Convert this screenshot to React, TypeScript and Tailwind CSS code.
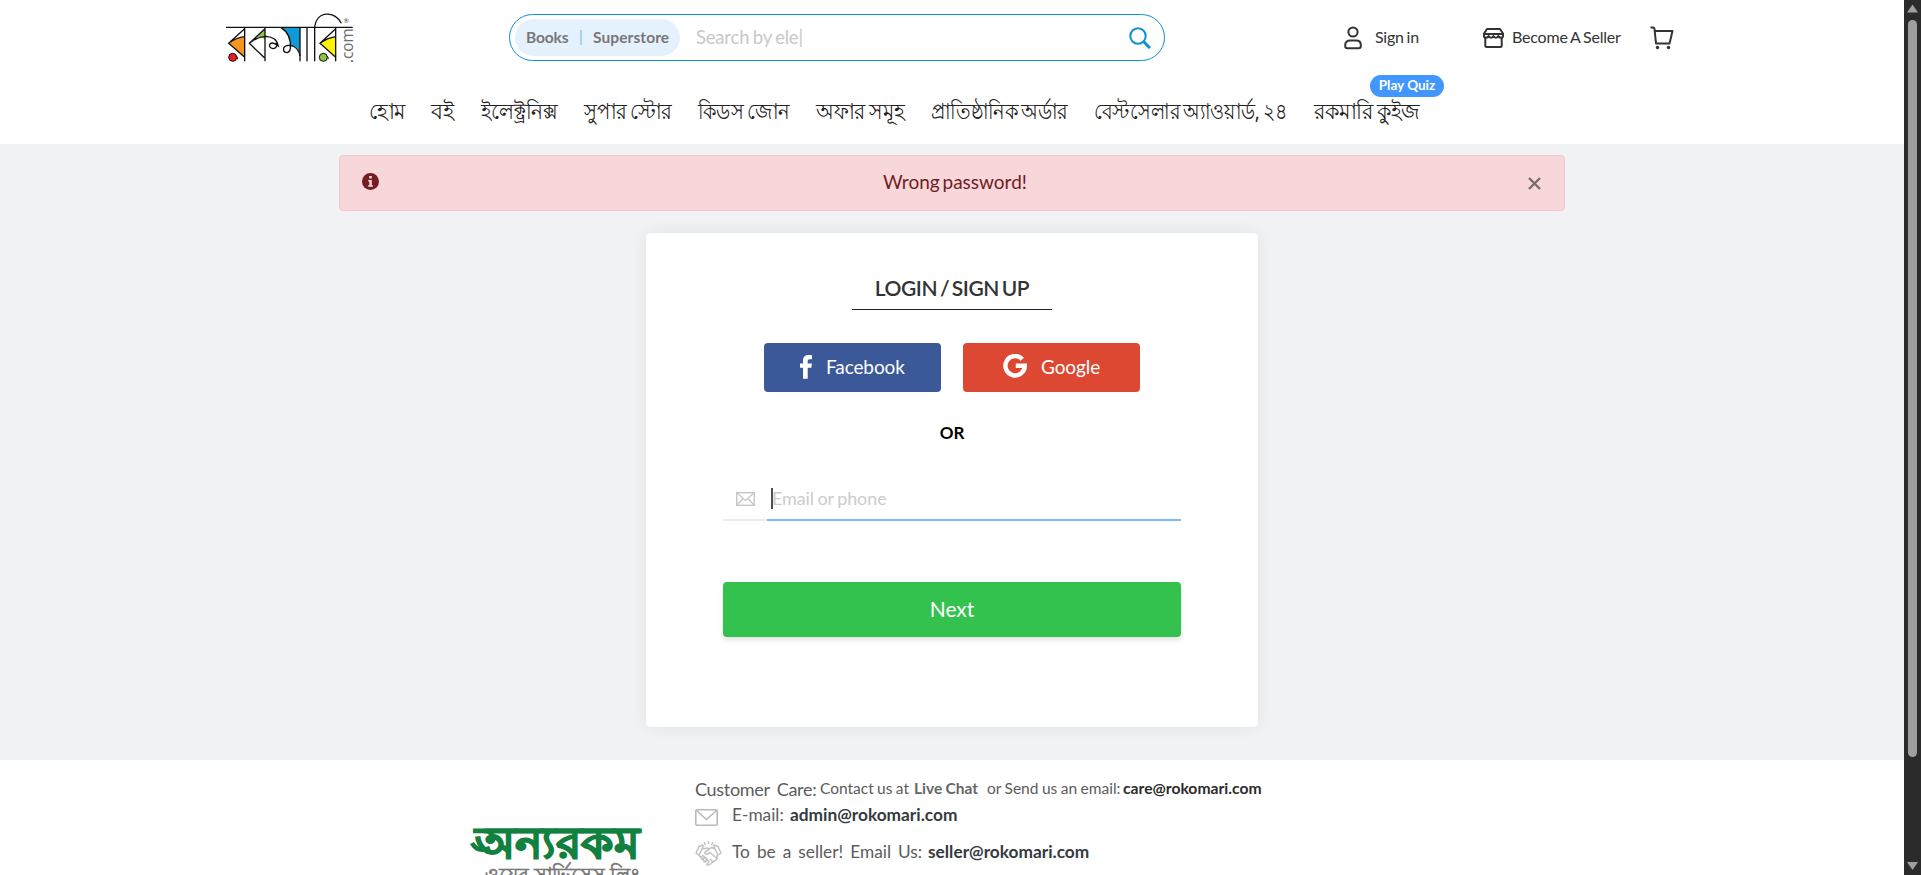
import type { ReactNode } from "react";

function RokomariLogo() {
  return (
    <svg className="h-[72px] w-[130px] shrink-0 overflow-visible" viewBox="45 0 390 216" fill="none" stroke="#111" strokeWidth="4">
      <path d="M56 130Q78 113 104 110V172Z" fill="#f7941d" stroke="none" />
      <path d="M104 86L56 130L104 172M56 130Q78 113 104 110M104 82V184" />
      <circle cx="68" cy="172" r="12" fill="#ed1c24" strokeWidth="3" />
      <path d="M79 168Q85 173 82 178" strokeWidth="3" />
      <path d="M165 88L142 112Q153 106 165 120Z" fill="#8dc63f" stroke="none" />
      <path d="M165 86L118 130L165 175M165 82V184M118 130Q140 110 168 109Q200 111 205 138Q188 124 180 132Q175 143 189 146Q203 144 199 128" />
      <path d="M213 83H270V158Q262 140 243 136Q244 101 213 83Z" fill="#0f9bd8" stroke="none" />
      <path d="M213 83Q245 103 241 145Q239 158 229 158Q219 156 221 144Q227 132 249 138Q268 148 270 168" />
      <path d="M270 82V184M291 82V184M314 184V82C320 28 378 34 394 70" />
      <path d="M377 110Q352 114 330 130L377 172Z" fill="#fff200" stroke="none" />
      <path d="M377 86L330 130L377 172M330 130Q352 114 377 110M377 82V184M48 82H428" />
      <circle cx="340" cy="172" r="12" fill="#8dc63f" strokeWidth="3" />
      <path d="M351 168Q357 173 354 178" strokeWidth="3" />
      <text x="0" y="0" transform="translate(428 189) rotate(-90)" fontSize="48" textLength="104" lengthAdjust="spacingAndGlyphs" className="font-['Open_Sans']" fill="#6d6e71" stroke="none">.com</text>
      <text x="401" y="70" fontSize="19" className="font-[Lato]" fill="#444" stroke="none">®</text>
    </svg>
  );
}

function SearchBar() {
  return (
    <div className="ml-[154px] flex h-[47px] w-[656px] shrink-0 items-center rounded-full border border-[#0e90cf] pl-[5px] pr-[13px]">
      <div className="flex h-[37px] w-[165px] items-center rounded-full bg-[#e6f1fe] pl-[11px] text-[15.5px] font-bold text-[#777]">
        <span className="w-[54px] tracking-[-0.1px]">Books</span>
        <span className="mr-[11px] h-[15px] w-[2px] bg-[#a9cffb]" />
        <span className="tracking-[0.1px]">Superstore</span>
      </div>
      <span className="ml-[16px] flex-1 text-[18.5px] tracking-[-0.2px] text-[#c8c8c8] [word-spacing:-1px]">Search by ele|</span>
      <svg className="h-[22px] w-[22px]" viewBox="0 0 22 22" fill="none" stroke="#0e90cf">
        <circle cx="9" cy="9" r="7.7" strokeWidth="2" />
        <path d="M14.5 14.5L21 21" strokeWidth="3" />
      </svg>
    </div>
  );
}

function HeaderLinks() {
  return (
    <div className="ml-[179px] flex items-center text-[16px] text-[#333] [word-spacing:-1px]">
      <svg className="h-[24px] w-[18px]" viewBox="0 0 18 24" fill="none" stroke="#333" strokeWidth="2">
        <circle cx="9" cy="6" r="4.6" />
        <path d="M1.2 19C1.2 15.8 3.6 14.6 6 14.6H12C14.4 14.6 16.8 15.8 16.8 19V20C16.8 21.600 16 22.200 14.600 22.200H3.400C2 22.200 1.200 21.600 1.200 20Z" />
      </svg>
      <span className="mb-[2px] ml-[13px] w-[108px] tracking-[-0.25px]">Sign in</span>
      <svg className="h-[20px] w-[21px]" viewBox="0 0 21 20" fill="none" stroke="#333" strokeWidth="2" strokeLinejoin="round">
        <path d="M4 1H17L20 5.500V8C20 10.300 16.300 10.300 15.300 8C14.500 10.300 11.300 10.300 10.500 8C9.700 10.300 6.500 10.300 5.700 8C4.700 10.300 1 10.300 1 8V5.500Z" />
        <path d="M1.500 6H19.500M2.300 9.500V17.500Q2.300 19 3.800 19H17.200Q18.700 19 18.700 17.500V9.500" />
      </svg>
      <span className="mb-[2px] ml-[8px] w-[138px] tracking-[-0.2px]">Become A Seller</span>
      <svg className="h-[24px] w-[24px]" viewBox="0 0 24 24" fill="none" stroke="#333" strokeWidth="2" strokeLinejoin="round">
        <path d="M0.500 1.500H3Q4.300 1.500 4.500 3L6 17.500H19.500L22.500 5H5" />
        <circle cx="7.500" cy="21.500" r="1.700" fill="#333" stroke="none" />
        <circle cx="18.500" cy="21.500" r="1.700" fill="#333" stroke="none" />
      </svg>
    </div>
  );
}

function NavItem({ className, children }: { className: string; children: ReactNode }) {
  return (
    <li className={className}>
      <a className="whitespace-nowrap">{children}</a>
    </li>
  );
}

function Nav() {
  return (
    <nav className="flex h-[72px] items-center pl-[369px] pt-[4px]">
      <ul className="flex font-['Noto_Sans',sans-serif] text-[22px] leading-[30px] text-[#222] [word-spacing:-2px]">
        <NavItem className="w-[62px] origin-left scale-x-[0.93]">হোম</NavItem>
        <NavItem className="w-[50px] origin-left scale-x-[0.98]">বই</NavItem>
        <NavItem className="w-[103px] origin-left scale-x-[0.91]">ইলেক্ট্রনিক্স</NavItem>
        <NavItem className="w-[114px] origin-left scale-x-[0.89]">সুপার স্টোর</NavItem>
        <NavItem className="w-[118px] origin-left scale-x-[0.88]">কিডস জোন</NavItem>
        <NavItem className="w-[115px] origin-left scale-x-[0.93]">অফার সমূহ</NavItem>
        <NavItem className="w-[163px] origin-left scale-x-[0.88]">প্রাতিষ্ঠানিক অর্ডার</NavItem>
        <NavItem className="w-[220px] origin-left scale-x-[0.87]">বেস্টসেলার অ্যাওয়ার্ড, ২৪</NavItem>
        <li className="relative w-[106px]">
          <a className="inline-block origin-left scale-x-[0.94] whitespace-nowrap">রকমারি কুইজ</a>
          <span className="absolute left-[56px] top-[-20px] flex h-[22px] w-[74px] items-center justify-center rounded-full bg-[#4197ff] font-[Lato] text-[13.5px] font-bold leading-none text-white [word-spacing:0px]">
            Play Quiz
          </span>
        </li>
      </ul>
    </nav>
  );
}

function Alert() {
  return (
    <div className="mx-auto flex h-[56px] w-[1226px] items-center rounded-[4px] border border-[#f5c6cb] bg-[#f8d7da] pl-[22px] pr-[23px] text-[#721c24]">
      <svg className="mb-[3px] h-[17px] w-[17px]" viewBox="0 0 17 17">
        <circle cx="8.500" cy="8.500" r="8.500" fill="#721c24" />
        <path d="M7.200 3H9.800V5.400H7.200ZM6.200 7H9.800V12.200H10.900V13.800H6.200V12.200H7.300V8.600H6.200Z" fill="#f8d7da" />
      </svg>
      <span className="mb-px ml-[504px] flex-1 text-[19px] [word-spacing:-2px]">Wrong password!</span>
      <svg className="mt-px h-[13px] w-[13px]" viewBox="0 0 13 13" stroke="#7c6b6d" strokeWidth="2.400">
        <path d="M1 1L12 12M12 1L1 12" />
      </svg>
    </div>
  );
}

function LoginCard() {
  return (
    <section className="mx-auto mt-[22px] flex h-[494px] w-[612px] flex-col items-center rounded-[4px] bg-white shadow-[0_0_16px_rgba(0,0,0,0.07)]">
      <h1 className="mt-[37px] flex h-[40px] w-[200px] items-center justify-center whitespace-nowrap border-b border-[#222] pb-[4px] text-[21px] font-semibold tracking-[-0.45px] text-[#333] [word-spacing:-2px]">
        LOGIN / SIGN UP
      </h1>
      <div className="mt-[33px] flex gap-[22px] text-[19px] tracking-[-0.1px] text-white">
        <button className="flex h-[49px] w-[177px] items-center rounded-[4px] bg-[#3b5998] pl-[36px]">
          <svg className="mb-[2px] h-[24px] w-[12px]" viewBox="0 0 12 24" fill="#fff">
            <path d="M12 .2V4.200H9.700C8 4.200 7.700 5 7.700 6.200V8.600H11.900L11.400 12.800H7.700V23.800H3V12.800H0V8.600H3V5.600C3 2 5.200 0 8.500 0C10 0 11.400.1 12 .2Z" />
          </svg>
          <span className="ml-[14px]">Facebook</span>
        </button>
        <button className="flex h-[49px] w-[177px] items-center rounded-[4px] bg-[#dd4832] pl-[40px]">
          <svg className="mb-[3px] h-[24px] w-[24px]" viewBox="0 0 24 24" fill="none" stroke="#fff" strokeWidth="4.400">
            <path d="M19.300 5.200A9.700 9.700 0 1 0 21.800 11.700H12.800" />
          </svg>
          <span className="ml-[14px]">Google</span>
        </button>
      </div>
      <div className="mt-[29px] text-[17px] font-bold leading-[24px] text-black">OR</div>
      <div className="mt-[33px] flex h-[43px] w-[458px]">
        <span className="flex w-[44px] items-center border-b-2 border-[#ebebeb] pl-[13px]">
          <svg className="h-[14px] w-[19px]" viewBox="0 0 19 14" fill="none" stroke="#c6c6c6">
            <rect x=".7" y=".7" width="17.600" height="12.600" strokeWidth="1.400" />
            <path d="M1 1L9.500 8.500L18 1M1 13L7 6.500M18 13L12 6.500" strokeWidth="1.200" />
          </svg>
        </span>
        <span className="flex flex-1 items-center border-b-2 border-[#7ebafb] pl-[4px] text-[18px] tracking-[-0.1px] text-[#ccc] [word-spacing:-1px]">
          <i className="mr-[-1px] h-[21px] w-[2px] bg-[#495057]" />
          Email or phone
        </span>
      </div>
      <button className="mt-[61px] h-[55px] w-[458px] rounded-[4px] bg-[#34c24f] pb-px text-[21px] text-white shadow-[0_3px_5px_rgba(0,0,0,0.12)]">
        Next
      </button>
    </section>
  );
}

function AnyarakamLogo() {
  return (
    <svg className="mt-[66px] h-[60px] w-[170px] shrink-0 overflow-visible" viewBox="0 0 170 60">
      <path d="M13 5H169" stroke="#12803f" strokeWidth="5" />
      <text x="4" y="32" fontSize="44" fontWeight="700" textLength="164" lengthAdjust="spacingAndGlyphs" fill="#12803f" stroke="#12803f" strokeWidth="1.4" className="font-['Noto_Sans',sans-serif]">অন্যরকম</text>
      <path d="M1 17Q6 27 19 22" fill="none" stroke="#12803f" strokeWidth="4.500" />
      <text x="14" y="57" fontSize="22" textLength="155" lengthAdjust="spacingAndGlyphs" fill="#777" stroke="#777" strokeWidth=".7" className="font-['Noto_Sans',sans-serif]">ওয়েব সার্ভিসেস লিঃ</text>
    </svg>
  );
}

function Footer() {
  return (
    <footer className="flex h-[115px] overflow-hidden bg-white pl-[471px] text-[#5c5c5c]">
      <AnyarakamLogo />
      <div className="ml-[54px] whitespace-nowrap pt-[15px] text-[18px]">
        <p className="flex h-[27px] items-center">
          <span className="w-[125px] pt-[2px] tracking-[-0.3px] [word-spacing:3px]">Customer Care:</span>
          <span className="w-[94px] text-[15.5px] [word-spacing:-0.6px]">Contact us at</span>
          <b className="w-[73px] text-[15.500px] text-[#666] [word-spacing:-0.5px]">Live Chat</b>
          <span className="w-[136px] text-[15.500px] [word-spacing:-0.5px]">or Send us an email:</span>
          <b className="text-[15.700px] text-[#2b2b2b]">care@rokomari.com</b>
        </p>
        <p className="flex h-[26px] items-center text-[17.300px]">
          <svg className="mt-[4px] h-[17px] w-[23px]" viewBox="0 0 23 17" fill="none" stroke="#b9b9b9" strokeWidth="1.600">
            <rect x=".8" y=".8" width="21.400" height="15.400" rx="1" />
            <path d="M1.500 1.500L11.500 10.500L21.500 1.500" />
          </svg>
          <span className="ml-[14px] w-[58px]">E-mail:</span>
          <b className="text-[#343a40]">admin@rokomari.com</b>
        </p>
        <p className="mt-[10px] flex h-[28px] items-center text-[17.300px]">
          <svg className="mt-[4px] h-[26px] w-[27px]" viewBox="0 0 27 26" fill="none" stroke="#c2c2c2" strokeWidth="1.500" strokeLinejoin="round">
            <path d="M8 4L4 5.500L1 12L4 14L8 6ZM19 4L23 5.500L26 12L23 14L19 6Z" />
            <path d="M8 8L12 7L14 8.500L10 11Q9.500 14 12.500 13L15 11.500L22 17.500M13 8L17 6.500L20 8M4 14L6 17M22 14L22 18L18 21L14 24L11 23.500M6 16L8 14.500L9.500 16L7.500 18.500ZM8 18.500L10.500 16.500L12 18L9.500 21ZM10 21L12.500 19L14 20.500L12 23M15 18L18 21M13.500 0V3M9 1L10.500 4M18 1L16.500 4" />
          </svg>
          <span className="ml-[10px] w-[196px] [word-spacing:2.6px]">To be a seller! Email Us:</span>
          <b className="text-[#343a40]">seller@rokomari.com</b>
        </p>
      </div>
    </footer>
  );
}

function Scrollbar() {
  return (
    <aside className="flex h-full w-[17px] shrink-0 flex-col items-center bg-[#2b2b2b]">
      <svg className="mt-[4px] h-[9px] w-[11px] shrink-0" viewBox="0 0 11 9" fill="#9f9f9f">
        <path d="M5.500 0.500L11 8.500H0Z" />
      </svg>
      <span className="mt-[7px] h-[737px] w-[9px] shrink-0 rounded-full bg-[#9f9f9f]" />
      <svg className="mb-[5px] mt-auto h-[8px] w-[11px] shrink-0" viewBox="0 0 11 8" fill="#9f9f9f">
        <path d="M0 0H11L5.500 8Z" />
      </svg>
    </aside>
  );
}

export default function App() {
  return (
    <div className="flex h-[875px] w-[1921px] overflow-hidden bg-white font-[Lato,sans-serif]">
      <div className="flex w-[1904px] flex-col">
        <header className="h-[144px] bg-white">
          <div className="flex h-[72px] items-center pl-[225px]">
            <RokomariLogo />
            <div className="flex h-full items-start pt-[14px]">
              <SearchBar />
              <div className="flex h-[47px] items-center">
                <HeaderLinks />
              </div>
            </div>
          </div>
          <Nav />
        </header>
        <main className="h-[616px] bg-[#f0f2f4] pt-[11px]">
          <Alert />
          <LoginCard />
        </main>
        <Footer />
      </div>
      <Scrollbar />
    </div>
  );
}
